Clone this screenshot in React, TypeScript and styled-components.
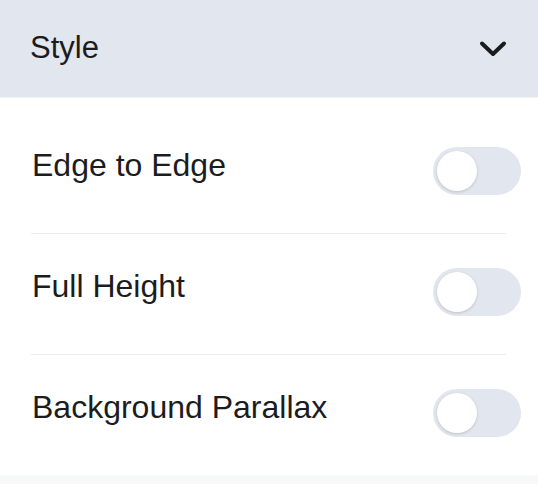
import React, { useState } from 'react';
import styled, { createGlobalStyle } from 'styled-components';

const GlobalStyle = createGlobalStyle`
  html, body {
    margin: 0;
    padding: 0;
    background: #f7f8fa;
    font-family: 'Liberation Sans', Arial, sans-serif;
    color: #1c1c1e;
  }
`;

const Panel = styled.div`
  width: 538px;
  background: #ffffff;
`;

const Header = styled.div`
  display: flex;
  align-items: center;
  justify-content: space-between;
  height: 97px;
  padding: 0 31px 0 30px;
  background: #e2e6ee;
  border-bottom: 1px solid #f1f3f7;
`;

const Title = styled.span`
  font-size: 31px;
  line-height: 1;
  margin-bottom: 2px;
`;

const List = styled.div`
  padding-top: 15px;
`;

const Row = styled.div`
  display: flex;
  align-items: center;
  justify-content: space-between;
  padding: 34px 17px 38px 32px;
`;

const Label = styled.span`
  font-size: 32px;
  line-height: 1;
  margin-bottom: 12px;
`;

const Divider = styled.div`
  height: 1px;
  margin: 0 32px 0 31px;
  background: #ececee;
`;

const Track = styled.button<{ $on: boolean }>`
  position: relative;
  width: 88px;
  height: 48px;
  padding: 0;
  border: none;
  border-radius: 24px;
  background: ${({ $on }) => ($on ? '#3b82f6' : '#e2e6ee')};
  cursor: pointer;
`;

const Knob = styled.span<{ $on: boolean }>`
  position: absolute;
  top: 4px;
  left: ${({ $on }) => ($on ? '44px' : '4px')};
  width: 40px;
  height: 40px;
  border-radius: 50%;
  background: #ffffff;
  box-shadow: 0 1px 3px rgba(20, 30, 50, 0.18);
`;

const Toggle = ({ on, onClick }: { on: boolean; onClick: () => void }) => (
  <Track $on={on} onClick={onClick} aria-pressed={on}>
    <Knob $on={on} />
  </Track>
);

const Chevron = () => (
  <svg width="28" height="18" viewBox="0 0 28 18">
    <path
      d="M3 3.5 L14 14 L25 3.5"
      fill="none"
      stroke="#1c1c1e"
      strokeWidth="4"
      strokeLinecap="round"
      strokeLinejoin="round"
    />
  </svg>
);

const options = ['Edge to Edge', 'Full Height', 'Background Parallax'];

const App = () => {
  const [state, setState] = useState<boolean[]>([false, false, false]);

  return (
    <>
      <GlobalStyle />
      <Panel>
        <Header>
          <Title>Style</Title>
          <Chevron />
        </Header>
        <List>
          {options.map((label, i) => (
            <React.Fragment key={label}>
              {i > 0 && <Divider />}
              <Row>
                <Label>{label}</Label>
                <Toggle
                  on={state[i]}
                  onClick={() =>
                    setState((s) => s.map((v, j) => (j === i ? !v : v)))
                  }
                />
              </Row>
            </React.Fragment>
          ))}
        </List>
      </Panel>
    </>
  );
};

export default App;
